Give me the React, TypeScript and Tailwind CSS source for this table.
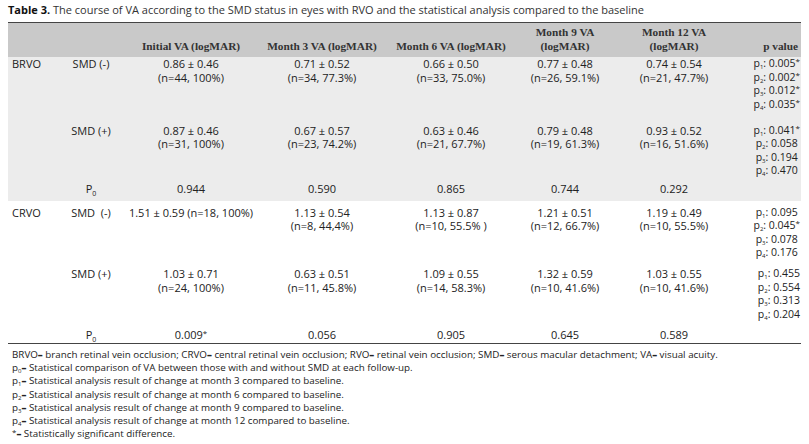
import React from "react";

const COLS = "grid grid-cols-[48px_70px_130px_132px_126px_102px_116px_1fr]";

type V = [string, string] | [string];

function Star() {
  return <sup className="text-[8px] relative -top-[3px]">*</sup>;
}

function P({ n, v, star }: { n: string; v: string; star?: boolean }) {
  return (
    <div className="whitespace-nowrap">
      p<sub className="text-[6px] align-baseline relative top-[2px]">{n}</sub>: {v}
      {star ? <Star /> : null}
    </div>
  );
}

function ValCell({ v }: { v: V }) {
  return (
    <div className="text-center whitespace-nowrap">
      <div>{v[0]}</div>
      {v[1] ? <div>{v[1]}</div> : null}
    </div>
  );
}

function DataRow({
  group,
  smd,
  vals,
  ps,
  className,
}: {
  group?: string;
  smd: string;
  vals: V[];
  ps: { n: string; v: string; star?: boolean }[];
  className?: string;
}) {
  return (
    <div className={`${COLS} ${className ?? ""}`}>
      <div className="pl-[4px]">{group ?? ""}</div>
      <div className="text-center whitespace-pre">{smd}</div>
      {vals.map((v, i) => (
        <ValCell key={i} v={v} />
      ))}
      <div className="flex justify-end pr-[1px]">
        <div className="flex flex-col items-center text-[10.5px]">
          {ps.map((p, i) => (
            <P key={i} {...p} />
          ))}
        </div>
      </div>
    </div>
  );
}

function P0Row({ vals, className }: { vals: React.ReactNode[]; className?: string }) {
  return (
    <div className={`${COLS} ${className ?? ""}`}>
      <div />
      <div className="text-center">
        P<sub className="text-[7px] align-baseline relative top-[3px]">0</sub>
      </div>
      {vals.map((v, i) => (
        <div key={i} className="text-center">
          {v}
        </div>
      ))}
      <div />
    </div>
  );
}

function Dash() {
  return <b className="font-black">–</b>;
}

export default function App() {
  const sans = { fontFamily: '"Open Sans", "Noto Sans", sans-serif' };
  return (
    <div className="w-[809px] h-[444px] bg-white text-[#222] overflow-hidden" style={sans}>
      <div className="pt-[3px] pl-[8px] text-[11px] leading-[14px] text-[#333] whitespace-nowrap">
        <span className="font-bold text-[#111]">Table 3.</span> The course of VA according to the SMD status in eyes with RVO and the statistical analysis compared to the baseline
      </div>
      <div className="mx-[8px] mt-[5px] border-t border-[#444] border-b text-[11px] leading-[13.5px]">
        {/* header */}
        <div
          className={`${COLS} bg-[#c9c9c9] pb-[4px] pt-[2px] items-end font-bold text-[#333] leading-[14px]`}
          style={{ fontFamily: '"Liberation Serif", "Times New Roman", serif', fontSize: "11.3px" }}
        >
          <div />
          <div />
          <div className="text-center whitespace-nowrap">Initial VA (logMAR)</div>
          <div className="text-center whitespace-nowrap">Month 3 VA (logMAR)</div>
          <div className="text-center whitespace-nowrap">Month 6 VA (logMAR)</div>
          <div className="text-center">
            <div>Month 9 VA</div>
            <div>(logMAR)</div>
          </div>
          <div className="text-center">
            <div>Month 12 VA</div>
            <div>(logMAR)</div>
          </div>
          <div className="flex justify-end pr-[3px] whitespace-nowrap">p value</div>
        </div>
        {/* BRVO */}
        <div className="bg-[#ececec] pb-[6px]">
          <DataRow
            group="BRVO"
            smd="SMD (-)"
            vals={[
              ["0.86 ± 0.46", "(n=44, 100%)"],
              ["0.71 ± 0.52", "(n=34, 77.3%)"],
              ["0.66 ± 0.50", "(n=33, 75.0%)"],
              ["0.77 ± 0.48", "(n=26, 59.1%)"],
              ["0.74 ± 0.54", "(n=21, 47.7%)"],
            ]}
            ps={[
              { n: "1", v: "0.005", star: true },
              { n: "2", v: "0.002", star: true },
              { n: "3", v: "0.012", star: true },
              { n: "4", v: "0.035", star: true },
            ]}
          />
          <DataRow
            className="mt-[12.5px]"
            smd="SMD (+)"
            vals={[
              ["0.87 ± 0.46", "(n=31, 100%)"],
              ["0.67 ± 0.57", "(n=23, 74.2%)"],
              ["0.63 ± 0.46", "(n=21, 67.7%)"],
              ["0.79 ± 0.48", "(n=19, 61.3%)"],
              ["0.93 ± 0.52", "(n=16, 51.6%)"],
            ]}
            ps={[
              { n: "1", v: "0.041", star: true },
              { n: "2", v: "0.058" },
              { n: "3", v: "0.194" },
              { n: "4", v: "0.470" },
            ]}
          />
          <P0Row className="mt-[4px]" vals={["0.944", "0.590", "0.865", "0.744", "0.292"]} />
        </div>
        {/* CRVO */}
        <div className="bg-white pt-[4.5px] pb-[1.5px]">
          <DataRow
            group="CRVO"
            smd={"SMD  (-)"}
            vals={[
              ["1.51 ± 0.59 (n=18, 100%)"],
              ["1.13 ± 0.54", "(n=8, 44,4%)"],
              ["1.13 ± 0.87", "(n=10, 55.5% )"],
              ["1.21 ± 0.51", "(n=12, 66.7%)"],
              ["1.19 ± 0.49", "(n=10, 55.5%)"],
            ]}
            ps={[
              { n: "1", v: "0.095" },
              { n: "2", v: "0.045", star: true },
              { n: "3", v: "0.078" },
              { n: "4", v: "0.176" },
            ]}
          />
          <DataRow
            className="mt-[7.5px]"
            smd="SMD (+)"
            vals={[
              ["1.03 ± 0.71", "(n=24, 100%)"],
              ["0.63 ± 0.51", "(n=11, 45.8%)"],
              ["1.09 ± 0.55", "(n=14, 58.3%)"],
              ["1.32 ± 0.59", "(n=10, 41.6%)"],
              ["1.03 ± 0.55", "(n=10, 41.6%)"],
            ]}
            ps={[
              { n: "1", v: "0.455" },
              { n: "2", v: "0.554" },
              { n: "3", v: "0.313" },
              { n: "4", v: "0.204" },
            ]}
          />
          <P0Row
            className="mt-[7px]"
            vals={[
              <span key="a">
                0.009
                <Star />
              </span>,
              "0.056",
              "0.905",
              "0.645",
              "0.589",
            ]}
          />
        </div>
      </div>
      {/* footnotes */}
      <div className="pl-[12px] pt-[4px] text-[9.8px] leading-[13.2px] text-[#222] whitespace-nowrap">
        <div>
          BRVO<Dash /> branch retinal vein occlusion; CRVO<Dash /> central retinal vein occlusion; RVO<Dash /> retinal vein occlusion; SMD<Dash /> serous macular detachment; VA<Dash /> visual acuity.
        </div>
        <div>
          p<sub className="text-[6px] align-baseline relative top-[2px]">0</sub>
          <Dash /> Statistical comparison of VA between those with and without SMD at each follow-up.
        </div>
        <div>
          p<sub className="text-[6px] align-baseline relative top-[2px]">1</sub>
          <Dash /> Statistical analysis result of change at month 3 compared to baseline.
        </div>
        <div>
          p<sub className="text-[6px] align-baseline relative top-[2px]">2</sub>
          <Dash /> Statistical analysis result of change at month 6 compared to baseline.
        </div>
        <div>
          p<sub className="text-[6px] align-baseline relative top-[2px]">3</sub>
          <Dash /> Statistical analysis result of change at month 9 compared to baseline.
        </div>
        <div>
          p<sub className="text-[6px] align-baseline relative top-[2px]">4</sub>
          <Dash /> Statistical analysis result of change at month 12 compared to baseline.
        </div>
        <div>
          <span className="text-[8px] relative -top-[2px]">*</span>
          <Dash /> Statistically significant difference.
        </div>
      </div>
    </div>
  );
}
